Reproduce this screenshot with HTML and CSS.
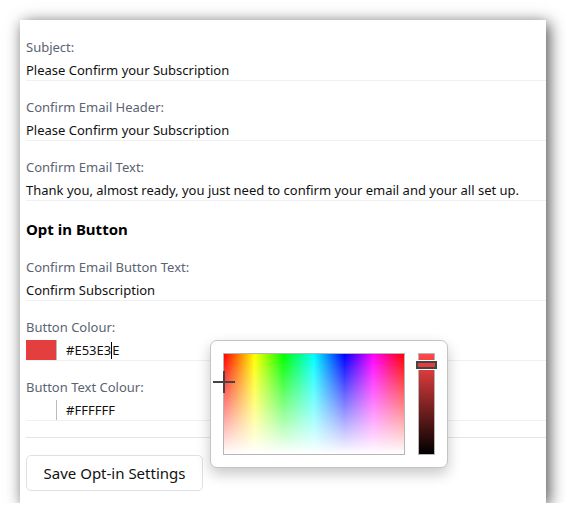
FILE: index.html
```html
<!DOCTYPE html>
<html>
<head>
	<title>Opt-in Settings</title>
	<link rel="stylesheet" href="styles.css">
</head>
<body>
	<div class="window">
		<div class="field">
			<label class="label">Subject:</label>
			<div class="input">Please Confirm your Subscription</div>
		</div>
		<div class="field">
			<label class="label">Confirm Email Header:</label>
			<div class="input">Please Confirm your Subscription</div>
		</div>
		<div class="field">
			<label class="label">Confirm Email Text:</label>
			<div class="input">Thank you, almost ready, you just need to confirm your email and your all set up.</div>
		</div>

		<h3 class="heading">Opt in Button</h3>

		<div class="field">
			<label class="label">Confirm Email Button Text:</label>
			<div class="input">Confirm Subscription</div>
		</div>
		<div class="field">
			<label class="label">Button Colour:</label>
			<div class="input color-input">
				<span class="swatch swatch-red"></span>
				<span class="hex">#E53E3<span class="caret"></span>E</span>
			</div>
		</div>
		<div class="field">
			<label class="label">Button Text Colour:</label>
			<div class="input color-input">
				<span class="swatch"></span>
				<span class="hex">#FFFFFF</span>
			</div>
		</div>

		<hr class="divider">

		<button class="save-btn">Save Opt-in Settings</button>

		<!-- colour picker popup -->
		<div class="picker">
			<div class="sat-area">
				<span class="cross"></span>
			</div>
			<div class="light-bar">
				<span class="thumb"></span>
			</div>
		</div>
	</div>
</body>
</html>
```

FILE: styles.css
```css
body{
	margin: 0;
	background: #fff;
	font-family: "Noto Sans", "Open Sans", sans-serif;
	color: #111;
}
.window{
	position: relative;
	margin: 20px 0 0 20px;
	width: 526px;
	height: 483px;
	background: #fff;
	box-shadow: 3px 3px 15px rgba(0,0,0,0.7);
	overflow: hidden;
	padding: 17px 0 0 6px;
	box-sizing: border-box;
}
.field{
	margin-bottom: 16px;
}
.label{
	display: block;
	font-size: 13px;
	line-height: 20px;
	color: #5a6372;
	margin-bottom: 3px;
}
.input{
	font-size: 13px;
	line-height: 21px;
	height: 20px;
	border-bottom: 1px solid #eef0f2;
	white-space: nowrap;
}
.heading{
	margin: 0 0 16px 0;
	font-size: 15px;
	line-height: 24px;
	font-weight: bold;
	color: #000;
}
.color-input{
	display: flex;
	align-items: center;
}
.swatch{
	width: 30px;
	height: 20px;
	border-right: 1px solid #b8bcc2;
	margin-right: 9px;
}
.swatch-red{
	background: #e53e3e;
}
.caret{
	display: inline-block;
	width: 1px;
	height: 17px;
	background: #000;
	vertical-align: -4px;
}
.divider{
	border: 0;
	border-top: 1px solid #e2e6ec;
	margin: 15px 0 17px 0;
}
.save-btn{
	width: 177px;
	height: 36px;
	background: #fff;
	border: 1px solid #dde1e7;
	border-radius: 5px;
	font-family: "Noto Sans", "Open Sans", sans-serif;
	font-size: 15px;
	color: #111;
}
.picker{
	position: absolute;
	left: 190px;
	top: 320px;
	width: 238px;
	height: 128px;
	box-sizing: border-box;
	padding: 12px;
	display: flex;
	gap: 13px;
	background: #fff;
	border: 1px solid #c4c4c4;
	border-radius: 7px;
	box-shadow: 0 6px 14px rgba(0,0,0,0.22);
}
.sat-area{
	position: relative;
	width: 182px;
	height: 102px;
	box-sizing: border-box;
	border: 1px solid #b5b5b5;
	background:
		linear-gradient(to bottom, rgba(255,255,255,0), #fff),
		linear-gradient(to right, #f00, #ff0 17%, #0f0 33%, #0ff 50%, #00f 67%, #f0f 83%, #f00);
}
.cross{
	position: absolute;
	left: -11px;
	top: 17px;
	width: 22px;
	height: 22px;
	background:
		linear-gradient(#444, #444) center / 22px 2px no-repeat,
		linear-gradient(#444, #444) center / 2px 22px no-repeat;
}
.light-bar{
	position: relative;
	width: 17px;
	height: 102px;
	box-sizing: border-box;
	border: 1px solid #b5b5b5;
	background: linear-gradient(to bottom, #ff4a4a, #e53e3e 12%, #000);
}
.thumb{
	position: absolute;
	left: -3px;
	top: 7px;
	width: 21px;
	height: 8px;
	box-sizing: border-box;
	border: 2px solid #444;
	outline: 1px solid #fff;
	background: #e53e3e;
}
```
